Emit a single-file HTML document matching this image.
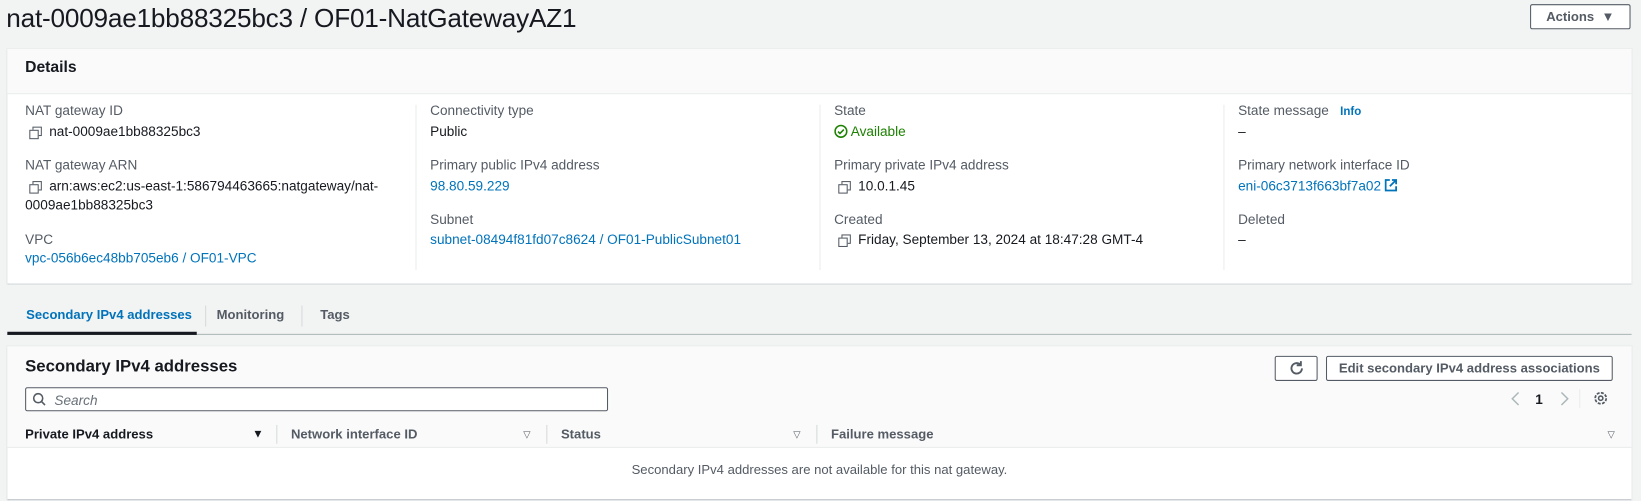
<!DOCTYPE html>
<html><head><meta charset="utf-8"><style>
*{box-sizing:border-box;margin:0;padding:0}
body{width:1641px;height:501px;background:#f2f3f3;overflow:hidden}
#w{position:absolute;left:0;top:0;width:1568px;height:479px;transform:scale(1.04656);transform-origin:0 0;font-family:"Liberation Sans",Arial,sans-serif;color:#16191f;font-size:13px}
.abs{position:absolute;white-space:nowrap}
h1{position:absolute;left:6px;top:4px;font-size:25px;font-weight:400;letter-spacing:-0.2px}
.btn{position:absolute;border:1px solid #545b64;border-radius:2px;background:#fff;font-weight:700;color:#545b64;font-size:12.5px;text-align:center}
.card{position:absolute;left:7px;width:1552px;background:#fff;box-shadow:0 1px 1px rgba(0,26,51,.3),0 0 0 1px #eaeded}
.lbl{color:#545b64}
.lnk{color:#0073bb}
.vd{position:absolute;width:1px;background:#eaeded}
.cp{display:inline-block;width:10px;height:10px;position:relative;margin-right:9px;vertical-align:-1px}
.cp:before{content:"";position:absolute;left:3px;top:0;width:7px;height:7px;border:1.3px solid #545b64}
.cp:after{content:"";position:absolute;left:0;top:3px;width:7px;height:7px;border:1.3px solid #545b64;background:#fff}
.th{position:absolute;top:408px;font-weight:700;font-size:12.5px}
.tri{position:absolute;top:410px;font-size:9px;color:#545b64}
</style></head><body><div id="w">
<h1>nat-0009ae1bb88325bc3 / OF01-NatGatewayAZ1</h1>
<div class="btn" style="left:1462px;top:4px;width:96px;height:24px;line-height:22px">Actions&nbsp;&nbsp;▼</div>

<div class="card" style="top:47px;height:224px">
 <div style="height:43px;background:#fafafa;border-bottom:1px solid #eaeded"></div>
</div>
<div class="abs" style="left:24px;top:56px;font-size:15px;font-weight:700">Details</div>
<div class="vd" style="left:397px;top:100px;height:158px"></div>
<div class="vd" style="left:783px;top:100px;height:158px"></div>
<div class="vd" style="left:1169px;top:100px;height:158px"></div>

<div class="abs lbl" style="left:24px;top:98px">NAT gateway ID</div>
<div class="abs" style="left:28px;top:118px"><span class="cp"></span>nat-0009ae1bb88325bc3</div>
<div class="abs lbl" style="left:24px;top:150px">NAT gateway ARN</div>
<div class="abs" style="left:28px;top:170px"><span class="cp"></span>arn:aws:ec2:us-east-1:586794463665:natgateway/nat-</div>
<div class="abs" style="left:24px;top:188px">0009ae1bb88325bc3</div>
<div class="abs lbl" style="left:24px;top:221px">VPC</div>
<div class="abs lnk" style="left:24px;top:239px">vpc-056b6ec48bb705eb6 / OF01-VPC</div>

<div class="abs lbl" style="left:411px;top:98px">Connectivity type</div>
<div class="abs" style="left:411px;top:118px">Public</div>
<div class="abs lbl" style="left:411px;top:150px">Primary public IPv4 address</div>
<div class="abs lnk" style="left:411px;top:170px">98.80.59.229</div>
<div class="abs lbl" style="left:411px;top:202px">Subnet</div>
<div class="abs lnk" style="left:411px;top:221px">subnet-08494f81fd07c8624 / OF01-PublicSubnet01</div>

<div class="abs lbl" style="left:797px;top:98px">State</div>
<div class="abs" style="left:797px;top:118px;color:#1d8102"><svg width="13" height="13" viewBox="0 0 14 14" style="vertical-align:-2px"><circle cx="7" cy="7" r="6" fill="none" stroke="#1d8102" stroke-width="1.6"/><path d="M4 7.2l2 2 4-4" fill="none" stroke="#1d8102" stroke-width="1.6"/></svg> Available</div>
<div class="abs lbl" style="left:797px;top:150px">Primary private IPv4 address</div>
<div class="abs" style="left:801px;top:170px"><span class="cp"></span>10.0.1.45</div>
<div class="abs lbl" style="left:797px;top:202px">Created</div>
<div class="abs" style="left:801px;top:221px"><span class="cp"></span>Friday, September 13, 2024 at 18:47:28 GMT-4</div>

<div class="abs lbl" style="left:1183px;top:98px">State message&nbsp;&nbsp;&nbsp;<b class="lnk" style="font-size:11px">Info</b></div>
<div class="abs" style="left:1183px;top:118px">–</div>
<div class="abs lbl" style="left:1183px;top:150px">Primary network interface ID</div>
<div class="abs lnk" style="left:1183px;top:170px">eni-06c3713f663bf7a02 <svg width="12" height="12" viewBox="0 0 12 12" style="vertical-align:-1px"><path d="M5 1H1v10h10V7M7 1h4v4M11 1L5 7" fill="none" stroke="#0073bb" stroke-width="1.7"/></svg></div>
<div class="abs lbl" style="left:1183px;top:202px">Deleted</div>
<div class="abs" style="left:1183px;top:221px">–</div>

<div class="abs" style="left:7px;top:319px;width:1552px;height:1px;background:#aab7b8"></div>
<div class="abs" style="left:7px;top:317px;width:181px;height:3px;background:#16191f"></div>
<div class="abs lnk" style="left:25px;top:294px;font-weight:700;font-size:12.5px">Secondary IPv4 addresses</div>
<div class="vd" style="left:196px;top:292px;height:20px;background:#d5dbdb"></div>
<div class="abs" style="left:207px;top:294px;font-weight:700;color:#545b64;font-size:12.5px">Monitoring</div>
<div class="vd" style="left:288px;top:292px;height:20px;background:#d5dbdb"></div>
<div class="abs" style="left:306px;top:294px;font-weight:700;color:#545b64;font-size:12.5px">Tags</div>

<div class="card" style="top:331px;height:146px">
 <div style="height:97px;background:#fafafa;border-bottom:1px solid #eaeded"></div>
</div>
<div class="abs" style="left:24px;top:342px;font-size:16px;font-weight:700">Secondary IPv4 addresses</div>
<div class="btn" style="left:1218px;top:340px;width:41px;height:24px"><svg width="16" height="16" viewBox="0 0 16 16" style="margin-top:3px"><path d="M13 8a5 5 0 1 1-1.5-3.6" fill="none" stroke="#545b64" stroke-width="1.8"/><path d="M12 1v4H8" fill="none" stroke="#545b64" stroke-width="1.8"/></svg></div>
<div class="btn" style="left:1267px;top:340px;width:274px;height:24px;line-height:22px">Edit secondary IPv4 address associations</div>
<div class="abs" style="left:24px;top:370px;width:557px;height:23px;border:1px solid #545b64;border-radius:2px;background:#fff"></div>
<svg class="abs" style="left:31px;top:375px" width="13" height="13" viewBox="0 0 13 13"><circle cx="5.5" cy="5.5" r="4.3" fill="none" stroke="#545b64" stroke-width="1.5"/><path d="M8.5 8.5l3.5 3.5" stroke="#545b64" stroke-width="1.5"/></svg>
<div class="abs" style="left:52px;top:375px;font-style:italic;color:#687078">Search</div>
<svg class="abs" style="left:1443px;top:374px" width="10" height="14" viewBox="0 0 10 14"><path d="M8 1L2 7l6 6" fill="none" stroke="#aab7b8" stroke-width="1.4"/></svg>
<div class="abs" style="left:1467px;top:374px;font-weight:700">1</div>
<svg class="abs" style="left:1490px;top:374px" width="10" height="14" viewBox="0 0 10 14"><path d="M2 1l6 6-6 6" fill="none" stroke="#aab7b8" stroke-width="1.4"/></svg>
<div class="vd" style="left:1509px;top:372px;height:18px"></div>
<svg class="abs" style="left:1522px;top:373px" width="15" height="15" viewBox="0 0 16 16"><circle cx="8" cy="8" r="2.2" fill="none" stroke="#545b64" stroke-width="1.6"/><circle cx="8" cy="8" r="5.6" fill="none" stroke="#545b64" stroke-width="1.8" stroke-dasharray="3 1.4"/></svg>

<div class="th" style="left:24px">Private IPv4 address</div>
<div class="tri" style="left:241px;color:#16191f;font-size:11px;top:409px">▼</div>
<div class="vd" style="left:264px;top:406px;height:18px;background:#d5dbdb"></div>
<div class="th" style="left:278px;color:#545b64">Network interface ID</div>
<div class="tri" style="left:500px">▽</div>
<div class="vd" style="left:522px;top:406px;height:18px;background:#d5dbdb"></div>
<div class="th" style="left:536px;color:#545b64">Status</div>
<div class="tri" style="left:758px">▽</div>
<div class="vd" style="left:780px;top:406px;height:18px;background:#d5dbdb"></div>
<div class="th" style="left:794px;color:#545b64">Failure message</div>
<div class="tri" style="left:1536px">▽</div>
<div class="abs" style="left:0;width:1566px;text-align:center;top:442px;color:#545b64;font-size:12.5px">Secondary IPv4 addresses are not available for this nat gateway.</div>
</div></body></html>
